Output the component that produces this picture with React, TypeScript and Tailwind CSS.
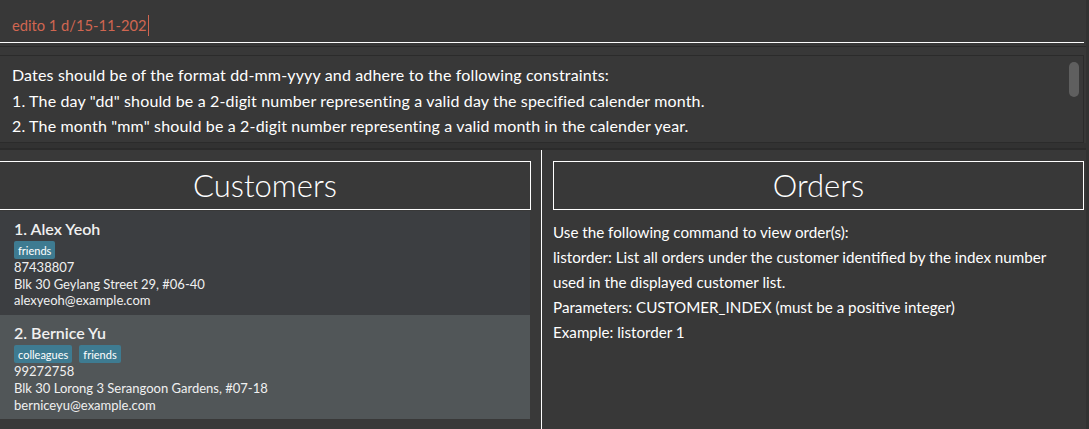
import React from "react";

const font = { fontFamily: "Lato, 'Open Sans', 'Noto Sans', sans-serif" };

function Tag({ label }: { label: string }) {
  return (
    <span className="inline-flex h-[18px] items-center rounded-[2px] bg-[#3e7b91] px-[4px] text-[11px] leading-none text-white">
      {label}
    </span>
  );
}

function Customer({
  index,
  name,
  tags,
  phone,
  address,
  email,
  bg,
}: {
  index: number;
  name: string;
  tags: string[];
  phone: string;
  address: string;
  email: string;
  bg: string;
}) {
  return (
    <div className={`w-[530px] pl-[14px] pt-[8px] pb-[6px] ${bg}`}>
      <div className="text-[16px] font-semibold leading-[20px] text-[#f0f0f0]">
        {index}. {name}
      </div>
      <div className="mt-[2px] flex gap-[7px]">
        {tags.map((t) => (
          <Tag key={t} label={t} />
        ))}
      </div>
      <div className="text-[13px] leading-[16.7px] text-[#f0f0f0]">
        <div>{phone}</div>
        <div>{address}</div>
        <div>{email}</div>
      </div>
    </div>
  );
}

export default function App() {
  return (
    <div className="relative flex h-[429px] w-[1089px] overflow-hidden bg-[#383838]" style={font}>
      <div className="w-[1086px]">
        {/* Command box */}
        <div className="mr-[2px] flex h-[43px] items-center border-b border-white pl-[12px] pt-[8px]">
          <span className="text-[14.7px] text-[#d06651]">edito 1 d/15-11-202</span>
          <span className="ml-[1px] h-[21px] w-px bg-[#d06651]" />
        </div>

        {/* Result display */}
        <div className="mt-[3px] border-t border-[#2b2b2b] pt-[8px]">
          <div className="relative mr-[2px] h-[88px] border-t border-r border-b border-[#2b2b2b] pl-[12px] pt-[6px]">
            <div className="text-[16px] leading-[25.5px] tracking-[0.15px] text-white">
              <div>Dates should be of the format dd-mm-yyyy and adhere to the following constraints:</div>
              <div>1. The day "dd" should be a 2-digit number representing a valid day the specified calender month.</div>
              <div>2. The month "mm" should be a 2-digit number representing a valid month in the calender year.</div>
            </div>
            <div className="absolute right-[4px] top-[6px] h-[35px] w-[10px] rounded-[5px] bg-[#5f5f5f]" />
          </div>
        </div>
        <div className="h-[5px] bg-[#323232]" />
        <div className="h-[2px] bg-[#2b2b2b]" />

        {/* Panels */}
        <div className="flex h-[280px]">
          <div className="w-[541px] bg-[#393939] pt-[11px]">
            <div className="flex h-[49px] w-[531px] items-center justify-center border-t border-r border-b border-white">
              <span className="text-[31px] font-light leading-none text-white">Customers</span>
            </div>
            <div className="mt-px">
              <Customer
                index={1}
                name="Alex Yeoh"
                tags={["friends"]}
                phone="87438807"
                address="Blk 30 Geylang Street 29, #06-40"
                email="alexyeoh@example.com"
                bg="bg-[#3c3e41]"
              />
              <Customer
                index={2}
                name="Bernice Yu"
                tags={["colleagues", "friends"]}
                phone="99272758"
                address="Blk 30 Lorong 3 Serangoon Gardens, #07-18"
                email="berniceyu@example.com"
                bg="bg-[#515658]"
              />
            </div>
          </div>
          <div className="w-px bg-white" />
          <div className="flex-1 pl-[11px] pt-[11px]">
            <div className="flex h-[49px] w-[531px] items-center justify-center border border-white">
              <span className="text-[31px] font-light leading-none text-white">Orders</span>
            </div>
            <div className="pt-[10px] text-[15.2px] leading-[25px] text-white">
              <div>Use the following command to view order(s):</div>
              <div>listorder: List all orders under the customer identified by the index number</div>
              <div>used in the displayed customer list.</div>
              <div>Parameters: CUSTOMER_INDEX (must be a positive integer)</div>
              <div>Example: listorder 1</div>
            </div>
          </div>
        </div>
      </div>
      <div className="flex-1 bg-[#323232]" />
    </div>
  );
}
